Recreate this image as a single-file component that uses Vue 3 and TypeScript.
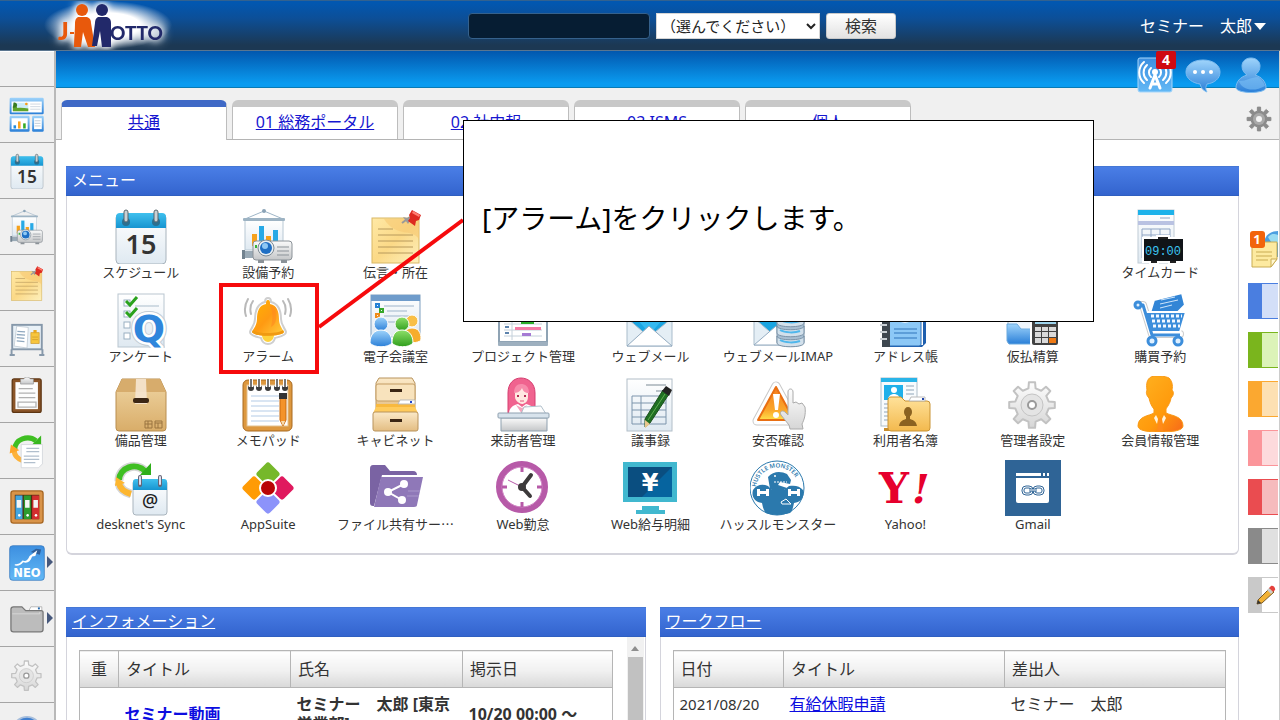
<script setup lang="ts">
import { ref } from 'vue'

interface MenuItem {
  icon: string
  label: string
  place?: 'end'
  marked?: boolean
  shortened?: boolean
}

interface SideItem {
  icon: string
  label: string
  expandable?: boolean
}

const keyword = ref('')
const target = ref('all')
const activeTab = ref(0)

const tabs: string[] = ['共通', '01 総務ポータル', '02 社内報', '03 ISMS', '個人']

const sideItems: SideItem[] = [
  { icon: 'portal', label: 'ポータル' },
  { icon: 'calendar', label: 'スケジュール' },
  { icon: 'projector', label: '設備予約' },
  { icon: 'note', label: '伝言・所在' },
  { icon: 'board', label: 'インフォメーション' },
  { icon: 'clipboard', label: '回覧' },
  { icon: 'docsync', label: 'ワークフロー' },
  { icon: 'binders', label: '文書管理' },
  { icon: 'neo', label: 'NEO', expandable: true },
  { icon: 'folder', label: 'その他', expandable: true },
  { icon: 'gear', label: '設定' },
  { icon: 'help', label: 'ヘルプ' },
]

const menuItems: MenuItem[] = [
  { icon: 'calendar', label: 'スケジュール' },
  { icon: 'projector', label: '設備予約' },
  { icon: 'note', label: '伝言・所在' },
  { icon: 'timecard', label: 'タイムカード', place: 'end' },
  { icon: 'survey', label: 'アンケート' },
  { icon: 'bell', label: 'アラーム', marked: true },
  { icon: 'meeting', label: '電子会議室' },
  { icon: 'project', label: 'プロジェクト管理' },
  { icon: 'mail', label: 'ウェブメール' },
  { icon: 'imap', label: 'ウェブメールIMAP' },
  { icon: 'address', label: 'アドレス帳' },
  { icon: 'expense', label: '仮払精算' },
  { icon: 'cart', label: '購買予約' },
  { icon: 'box', label: '備品管理' },
  { icon: 'memo', label: 'メモパッド' },
  { icon: 'cabinet', label: 'キャビネット' },
  { icon: 'reception', label: '来訪者管理' },
  { icon: 'minutes', label: '議事録' },
  { icon: 'safety', label: '安否確認' },
  { icon: 'directory', label: '利用者名簿' },
  { icon: 'gear', label: '管理者設定' },
  { icon: 'member', label: '会員情報管理' },
  { icon: 'sync', label: "desknet's Sync" },
  { icon: 'appsuite', label: 'AppSuite' },
  { icon: 'share', label: 'ファイル共有サー…', shortened: true },
  { icon: 'clock', label: 'Web勤怠' },
  { icon: 'pay', label: 'Web給与明細' },
  { icon: 'hustle', label: 'ハッスルモンスター' },
  { icon: 'yahoo', label: 'Yahoo!' },
  { icon: 'link', label: 'Gmail' },
]

const notes: string[] = ['blue', 'green', 'orange', 'pink', 'red', 'gray']

/** Outline of a gear wheel with flat-topped teeth. */
function gearPath(cx: number, cy: number, outer: number, inner: number, teeth: number): string {
  const step = (Math.PI * 2) / teeth
  const points: string[] = []
  for (let i = 0; i < teeth; i++) {
    const a = i * step - Math.PI / 2
    const corners: [number, number][] = [
      [inner, a - step * 0.27],
      [outer, a - step * 0.17],
      [outer, a + step * 0.17],
      [inner, a + step * 0.27],
    ]
    for (const [r, t] of corners) {
      points.push(`${(cx + r * Math.cos(t)).toFixed(2)} ${(cy + r * Math.sin(t)).toFixed(2)}`)
    }
  }
  return `M${points.join('L')}Z`
}

const largeGear = gearPath(27, 29, 23, 17, 8)
const smallGear = gearPath(13, 13, 12, 8, 8)
</script>

<template>
  <div class="app">
    <svg class="paints" aria-hidden="true">
      <defs>
        <linearGradient id="g-paper" x1="0" y1="0" x2="0" y2="1"><stop offset="0" stop-color="#ffffff" /><stop offset="1" stop-color="#dfe9f1" /></linearGradient>
        <linearGradient id="g-gray" x1="0" y1="0" x2="0" y2="1"><stop offset="0" stop-color="#fafafa" /><stop offset="1" stop-color="#c4c6c8" /></linearGradient>
        <linearGradient id="g-wheel" x1="0" y1="0" x2="0" y2="1"><stop offset="0" stop-color="#fdfdfd" /><stop offset="1" stop-color="#d6d6d6" /></linearGradient>
        <linearGradient id="g-sky" x1="0" y1="0" x2="0" y2="1"><stop offset="0" stop-color="#3fc0ee" /><stop offset="1" stop-color="#1694d0" /></linearGradient>
        <linearGradient id="g-blue" x1="0" y1="0" x2="0" y2="1"><stop offset="0" stop-color="#9fd4fb" /><stop offset="1" stop-color="#2a7fd8" /></linearGradient>
        <linearGradient id="g-green" x1="0" y1="0" x2="0" y2="1"><stop offset="0" stop-color="#8fe06a" /><stop offset="1" stop-color="#2f9e1c" /></linearGradient>
        <linearGradient id="g-amber" x1="0" y1="0" x2="1" y2="1"><stop offset="0" stop-color="#ffb400" /><stop offset="0.5" stop-color="#ff9a12" /><stop offset="1" stop-color="#ffcf40" /></linearGradient>
        <linearGradient id="g-member" x1="0" y1="0" x2="1" y2="1"><stop offset="0" stop-color="#ffb321" /><stop offset="0.6" stop-color="#ff9a0c" /><stop offset="1" stop-color="#f7691a" /></linearGradient>
        <linearGradient id="g-note" x1="0" y1="0" x2="1" y2="1"><stop offset="0" stop-color="#ffe9a6" /><stop offset="0.5" stop-color="#fbd987" /><stop offset="1" stop-color="#fdf0bd" /></linearGradient>
        <linearGradient id="g-box" x1="0" y1="0" x2="0" y2="1"><stop offset="0" stop-color="#efd5a3" /><stop offset="1" stop-color="#d9ad69" /></linearGradient>
        <linearGradient id="g-cabinet" x1="0" y1="0" x2="0" y2="1"><stop offset="0" stop-color="#fbe9c8" /><stop offset="1" stop-color="#e3bd82" /></linearGradient>
        <linearGradient id="g-folder" x1="0" y1="0" x2="0" y2="1"><stop offset="0" stop-color="#ffe29a" /><stop offset="1" stop-color="#f3b94e" /></linearGradient>
        <linearGradient id="g-warn" x1="0" y1="0" x2="0" y2="1"><stop offset="0" stop-color="#f47a1c" /><stop offset="0.7" stop-color="#fba72b" /><stop offset="1" stop-color="#ffe04a" /></linearGradient>
        <linearGradient id="g-tile" x1="0" y1="0" x2="0" y2="1"><stop offset="0" stop-color="#3d8fe0" /><stop offset="1" stop-color="#62b8f5" /></linearGradient>
        <path id="hustle-arc" d="M6 29a21 21 0 0 1 43 0" />
      </defs>
    </svg>

    <svg class="symbols" aria-hidden="true">
      <symbol id="i-calendar" viewBox="0 0 56 56">
        <rect x="3" y="6" width="50" height="50" rx="4" fill="url(#g-paper)" stroke="#a9b4bd" />
        <path d="M3 20V9a4 4 0 0 1 4-4h42a4 4 0 0 1 4 4v11z" fill="url(#g-sky)" />
        <g fill="#2c6f8f"><circle cx="13" cy="14" r="4" /><circle cx="43" cy="14" r="4" /></g>
        <g fill="#c9d0d4" stroke="#59666e"><rect x="11" y="2" width="4" height="12" rx="2" /><rect x="41" y="2" width="4" height="12" rx="2" /></g>
        <text x="28" y="46" font-family="Noto Sans, sans-serif" font-size="27" font-weight="600" text-anchor="middle" fill="#333">15</text>
      </symbol>

      <symbol id="i-projector" viewBox="0 0 56 56">
        <path d="M5 11 24 3l19 8" fill="none" stroke="#9fb6c8" />
        <circle cx="24" cy="3" r="2" fill="#8aa2b6" />
        <rect x="5" y="12" width="38" height="30" fill="url(#g-paper)" stroke="#b8c8d4" />
        <rect x="3" y="10" width="42" height="3" rx="1" fill="#9db3c3" />
        <rect x="12" y="26" width="5" height="12" fill="#f6a11b" /><rect x="19" y="18" width="5" height="18" fill="#27a9e6" />
        <rect x="26" y="28" width="5" height="8" fill="#f6a11b" /><rect x="33" y="22" width="5" height="14" fill="#27a9e6" />
        <path d="M4 43h10v7H4z" fill="#9aaab6" /><path d="M2 42h3v9H2z" fill="#72828f" />
        <rect x="13" y="33" width="39" height="19" rx="3" fill="url(#g-gray)" stroke="#8b9298" />
        <path d="M18 52h6v3h-6zM41 52h6v3h-6z" fill="#8b9298" />
        <circle cx="26" cy="40" r="8" fill="#e8eef2" stroke="#7d8a94" /><circle cx="26" cy="40" r="6" fill="#1f6fc4" /><circle cx="25" cy="38" r="3" fill="#8fc8f4" />
        <path d="M37 39h12M37 43h12M37 47h12" stroke="#8b9298" />
        <path d="M15 37h2v3h-2z" fill="#35b435" />
      </symbol>

      <symbol id="i-note" viewBox="0 0 56 56">
        <rect x="4" y="10" width="47" height="45" fill="url(#g-note)" stroke="#d9b865" />
        <path d="M51 11v20C44 20 28 30 16 11z" fill="#f6c873" opacity=".6" />
        <path d="M10 21h15M10 27h35M10 33h35M10 39h35M10 45h35" stroke="#b89a5c" />
        <path d="m34 15 8-6" stroke="#999" stroke-width="2" /><path d="M35 9l8 2-3 5z" fill="#9b9b9b" />
        <path d="M41 7l3-5 9 5-2 5-3 1-1 5-7-5 2-3z" fill="#dd2a20" /><path d="M45 3l7 4-1 2-7-4z" fill="#ff7d70" />
      </symbol>

      <symbol id="i-timecard" viewBox="0 0 56 56">
        <rect x="6" y="2" width="36" height="53" fill="url(#g-paper)" stroke="#c0ccd6" />
        <path d="M6 2h36v5H6z" fill="#1db2ea" /><path d="M6 13h36v4H6z" fill="#b9c2e2" />
        <path d="M10 21h28M10 27h28M10 33h28M10 39h28M10 45h28M10 50h28M10 21v29M19 21v29M28 21v29M38 21v29M28 10h10" stroke="#8fa5c4" fill="none" />
        <path d="M11 30h14v-2h12v2h14v24h-6v2h-8v-2H26v2h-8v-2h-7z" fill="#222" stroke="#fff" stroke-width="2" />
        <path d="M12 31h39v22H12z" fill="#101418" />
        <text x="31" y="47" font-family="Liberation Mono, monospace" font-size="12" text-anchor="middle" fill="#3cc6f2">09:00</text>
      </symbol>

      <symbol id="i-survey" viewBox="0 0 56 56">
        <rect x="5" y="2" width="46" height="53" fill="url(#g-paper)" stroke="#b9c6d0" />
        <path d="M22 14h24M22 25h10" stroke="#a9bccb" />
        <g fill="#fff" stroke="#9ab0c2"><rect x="11" y="8" width="6" height="6" /><rect x="11" y="19" width="6" height="6" /><rect x="11" y="30" width="6" height="6" /><rect x="11" y="41" width="6" height="6" /></g>
        <path d="m13 9 4 4 7-8M13 20l4 4 7-8" fill="none" stroke="#2aa21d" stroke-width="3" />
        <text x="36" y="50" font-family="DejaVu Sans, sans-serif" font-size="38" font-weight="700" text-anchor="middle" fill="#fff" stroke="#c3ccd4" stroke-width="7" stroke-linejoin="round" paint-order="stroke">Q</text>
        <text x="36" y="50" font-family="DejaVu Sans, sans-serif" font-size="38" font-weight="700" text-anchor="middle" fill="#2f86dc" stroke="#fff" stroke-width="5" stroke-linejoin="round" paint-order="stroke">Q</text>
      </symbol>

      <symbol id="i-bell" viewBox="0 0 56 56">
        <g fill="none" stroke="#b9b9b9" stroke-width="2" stroke-linecap="round"><path d="M8 7c-3 5-4 11-2 17M13 9c-3 4-3 9-2 13M48 7c3 5 4 11 2 17M43 9c3 4 3 9 2 13" /></g>
        <g transform="translate(1 0)">
          <path d="M27 6c-2 0-3 2-3 4-8 2-10 9-10 17 0 6-4 9-5 13 0 4 8 5 11 6 1 4 4 6 7 6s6-2 7-6c3-1 11-2 11-6-1-4-5-7-5-13 0-8-2-15-10-17 0-2-1-4-3-4z" fill="#fff" stroke="#cfcfcf" stroke-width="2" />
          <path d="M21 43h12c0 4-3 7-6 7s-6-3-6-7z" fill="#ffd23c" />
          <path d="M27 8c-2 0-2 2-2 4-7 1-9 8-9 15 0 6-3 9-5 13 2 5 30 5 32 0-2-4-5-7-5-13 0-7-2-14-9-15 0-2 0-4-2-4z" fill="url(#g-amber)" />
          <path d="M11 40c2 5 30 5 32 0l-1-2c-4 4-26 4-30 0z" fill="#f09a12" />
          <path d="M29 13c6 2 7 9 6 15-1 4-3 6-5 7 2-8 2-15-1-22z" fill="#ff8a1e" opacity=".6" />
        </g>
      </symbol>

      <symbol id="i-meeting" viewBox="0 0 56 56">
        <rect x="3" y="3" width="49" height="42" fill="url(#g-paper)" stroke="#7f9fc0" />
        <path d="M3 3h49v6H3z" fill="#6f9ccb" />
        <path d="M8 12h3v3H8z" fill="none" stroke="#2581d4" stroke-width="2" /><path d="M12 17h3v3h-3z" fill="none" stroke="#36a82c" stroke-width="2" /><path d="M8 22h3v3H8z" fill="none" stroke="#ee8c1b" stroke-width="2" />
        <path d="M16 14h30M19 19h20M16 24h30M16 30h28" stroke="#9db4ca" />
        <g stroke="#fff"><circle cx="44" cy="29" r="6" fill="#f9bf46" /><path d="M34 51c0-10 4-15 10-15s9 4 9 11c0 4-9 4-19 4z" fill="#f6ad2c" />
          <circle cx="13" cy="32" r="7" fill="url(#g-blue)" /><path d="M2 51c0-9 5-13 11-13s11 4 11 13c-4 5-18 5-22 0z" fill="url(#g-blue)" />
          <circle cx="34" cy="32" r="7" fill="url(#g-green)" /><path d="M24 51c0-9 4-13 10-13s11 4 11 13c-4 5-17 5-21 0z" fill="url(#g-green)" /></g>
      </symbol>

      <symbol id="i-project" viewBox="0 0 56 56">
        <rect x="4" y="6" width="48" height="44" fill="#fff" stroke="#8fa3b4" stroke-width="2" />
        <path d="M9 32h38M9 38h38M9 44h38M17 26v22" stroke="#c4d0da" />
        <path d="M26 29h13v3H26z" fill="#2eaf2b" /><path d="M20 35h26v3H20z" fill="#f47aa4" /><path d="M27 41h9v3h-9z" fill="#a57ad4" />
        <path d="M10 29h4M10 35h4M10 41h4" stroke="#5d83ad" stroke-width="2" />
        <rect x="3" y="50" width="50" height="4" rx="1" fill="#9eb0bf" />
      </symbol>

      <symbol id="i-mail" viewBox="0 0 56 56">
        <path d="M5 22 27 4l23 18v32H5z" fill="#1ba5e1" />
        <path d="M14 26h28L28 42z" fill="#35b9f0" />
        <path d="M5 26 27 45 50 26v28H5z" fill="#e4eef5" stroke="#a9bccb" />
        <path d="M5 54 27 34 50 54z" fill="#fff" stroke="#93abc0" />
      </symbol>

      <symbol id="i-imap" viewBox="0 0 56 56">
        <path d="M4 22 26 4l23 18v30H4z" fill="#1ba5e1" />
        <path d="M4 26 26 45 40 34v19H4z" fill="#e4eef5" stroke="#a9bccb" />
        <path d="M4 53 26 34 38 53z" fill="#fff" stroke="#93abc0" />
        <g stroke="#7b93a8"><path d="M27 22v28c0 6 27 6 27 0V22z" fill="#a8bfd2" /><path d="M27 44v7c0 5 27 5 27 0v-7c0 5-27 5-27 0zM27 34v7c0 5 27 5 27 0v-7c0 5-27 5-27 0zM27 24v7c0 5 27 5 27 0v-7z" fill="#d2e0eb" /></g>
        <path d="M30 38c5 3 15 3 20 1M30 48c5 3 15 3 20 1M30 28c5 3 15 3 20 1" stroke="#4fb7ec" stroke-width="2" fill="none" />
      </symbol>

      <symbol id="i-address" viewBox="0 0 56 56">
        <path d="M10 5h39v46l-4 4H10z" fill="#1f5fae" /><path d="M10 5h36v48H10z" fill="#fff" />
        <rect x="8" y="4" width="36" height="50" rx="2" fill="#8cc8f6" stroke="#2b6cb5" />
        <path d="M5 4h8v51H5z" fill="#3e474f" />
        <path d="M3 12h7M3 19h7M3 26h7M3 33h7M3 40h7M3 47h7" stroke="#c9cfd4" stroke-width="2" />
        <circle cx="28" cy="22" r="9" fill="#e9f5ff" />
        <path d="M17 37h23M17 41h23M17 46h23" stroke="#2f74bb" />
      </symbol>

      <symbol id="i-expense" viewBox="0 0 56 56">
        <path d="M3 10h25l4 5v36H3z" fill="#eef5fb" stroke="#a9bccb" />
        <path d="M2 32h10l4 5h14v15H4l-2-3z" fill="url(#g-blue)" stroke="#6ba9de" />
        <rect x="26" y="12" width="28" height="42" rx="3" fill="#424242" stroke="#fff" stroke-width="2" />
        <path d="M30 24h21v8H30z" fill="#9fd5ee" />
        <g fill="#dadada"><path d="M30 35h6v4h-6zM37 35h6v4h-6zM44 35h7v4h-7zM30 40h6v5h-6zM37 40h6v5h-6zM44 40h7v5h-7zM30 46h6v5h-6zM37 46h6v5h-6z" /></g>
        <path d="M44 46h7v5h-7z" fill="#f07a14" />
      </symbol>

      <symbol id="i-cart" viewBox="0 0 56 56">
        <path d="m22 8 28-7 3 12-8 8H18z" fill="#3285d6" stroke="#fff" stroke-width="2" />
        <path d="m29 8 14-3M28 12l18-4M28 16l12-3" stroke="#cfe5fa" stroke-width="1" />
        <g fill="none" stroke-linejoin="round" stroke-linecap="round"><path d="M6 13h5l9 29h28" stroke="#ccc" stroke-width="8" /><path d="M6 13h5l9 29h28" stroke="#fff" stroke-width="6" /></g>
        <path d="M13 20h41l-6 20H19z" fill="#3d8edb" stroke="#fff" stroke-width="2" />
        <path d="M19 24h31M20 29h29M21 34h27" stroke="#f2f8ff" stroke-width="3" stroke-dasharray="3 2" />
        <path d="M6 13h5l9 30h28" fill="none" stroke="#3d8edb" stroke-width="3" stroke-linejoin="round" />
        <g fill="#dff0ff" stroke="#3d8edb" stroke-width="3"><circle cx="6" cy="13" r="3" /><circle cx="20" cy="49" r="4" /><circle cx="46" cy="49" r="4" /></g>
      </symbol>

      <symbol id="i-box" viewBox="0 0 56 56">
        <path d="M9 3h38l6 13v36a3 3 0 0 1-3 3H6a3 3 0 0 1-3-3V16z" fill="url(#g-box)" stroke="#b98e50" />
        <path d="M9 3h38l6 13H3z" fill="#d7ac6c" />
        <path d="M23 3h10l1 25H22z" fill="#f6e5d2" opacity=".9" />
        <rect x="20" y="22" width="16" height="5" rx="2" fill="#3b2614" />
        <path d="M32 45h7v7h-7zM42 45h7v7h-7zM35 45v7M32 48h7M45 47v5M42 47h7" stroke="#9a7440" fill="none" />
      </symbol>

      <symbol id="i-memo" viewBox="0 0 56 56">
        <rect x="3" y="4" width="49" height="51" rx="5" fill="#dd983f" stroke="#a96a20" />
        <rect x="7" y="9" width="41" height="41" fill="#fff" stroke="#e3c08d" />
        <path d="M11 20h28M11 25h28M11 30h28M11 35h28M11 40h28M11 45h28" stroke="#b3cbe6" />
        <g fill="#3c3c3c"><circle cx="11" cy="12" r="3" /><circle cx="19" cy="12" r="3" /><circle cx="28" cy="12" r="3" /><circle cx="37" cy="12" r="3" /><circle cx="45" cy="12" r="3" /></g>
        <path d="M11 3v8M19 3v8M28 3v8M37 3v8M45 3v8" stroke="#fff" stroke-width="4" /><path d="M11 3v8M19 3v8M28 3v8M37 3v8M45 3v8" stroke="#777" stroke-width="2" />
        <path d="M40 22h6v22l-3 6-3-6z" fill="#f4932a" stroke="#c76a10" /><path d="M39 17h8v6h-8z" fill="#333" /><path d="m41 45 2 5 2-5z" fill="#f8dcae" />
      </symbol>

      <symbol id="i-cabinet" viewBox="0 0 56 56">
        <path d="M11 2h33l3 5v29H8V7z" fill="url(#g-cabinet)" stroke="#b8935c" />
        <rect x="8" y="8" width="39" height="17" rx="2" fill="#f8e3bd" stroke="#c39c63" />
        <path d="M8 28h22l3-3h14v12H8z" fill="#f8b93e" /><path d="M32 24h15v4H30z" fill="#fff" stroke="#bbb" /><path d="M42 25h2v2h-2z" fill="#24c" />
        <path d="M8 31h39l3 6H5z" fill="#ffcb5c" />
        <rect x="5" y="36" width="45" height="19" rx="2" fill="url(#g-cabinet)" stroke="#b8935c" />
        <path d="M22 13h12v3H22zM22 43h12v3H22z" fill="#3b2614" />
      </symbol>

      <symbol id="i-reception" viewBox="0 0 56 56">
        <path d="M13 38V17C13 7 19 2 26 2s14 5 14 15v21z" fill="#f0638f" stroke="#d53e70" />
        <path d="M20 14c2-5 11-5 13 0v7c0 5-4 7-6 7s-7-3-7-7z" fill="#ffe9e2" />
        <path d="M19 17c5 0 7-3 8-5 1 3 3 5 7 5 0-7-4-9-8-9s-7 3-7 9z" fill="#f78bab" />
        <path d="M14 38c0-6 4-9 9-10l4 3 4-3c5 1 9 4 9 10z" fill="#fff" /><path d="m21 29 6 9 5-9-5 3z" fill="#f5a3bb" />
        <path d="M22 20h2M29 20h2" stroke="#b52f58" stroke-width="2" /><path d="M25 25h4" stroke="#e2557e" />
        <path d="m29 31 17-1 5 8H26z" fill="#fdfdfd" stroke="#b2c1cc" />
        <path d="M6 42h46v13H6z" fill="url(#g-gray)" stroke="#8fa1b0" />
        <rect x="3" y="37" width="51" height="5" rx="1" fill="#d8e3ec" stroke="#8fa1b0" />
      </symbol>

      <symbol id="i-minutes" viewBox="0 0 56 56">
        <rect x="5" y="3" width="45" height="52" fill="url(#g-paper)" stroke="#b2bec8" />
        <path d="M24 9h20M34 15h10" stroke="#7d8b96" />
        <path d="M10 20h34v28H10zM10 27h34M10 34h34M10 41h34M19 20v28" fill="none" stroke="#7d95ac" />
        <path d="m41 14 6 4-19 29-5 4 0-8z" fill="#1f6f22" stroke="#1b4f1d" /><path d="m23 44 5 4-5 4z" fill="#e8c78e" /><path d="m40 15 4-5 6 4-3 6z" fill="#222" /><path d="m43 18-17 26" stroke="#5fae50" stroke-width="1" />
      </symbol>

      <symbol id="i-safety" viewBox="0 0 56 56">
        <path d="M26 10 45 45H7z" fill="#fff" stroke="#c9c9c9" stroke-width="9" stroke-linejoin="round" />
        <path d="M26 10 45 45H7z" fill="#fff" stroke="#fff" stroke-width="7" stroke-linejoin="round" />
        <path d="M26 11 44 44H8z" fill="url(#g-warn)" stroke="#e96f13" stroke-width="2" stroke-linejoin="round" />
        <path d="M23 18h7l-2 16h-3z" fill="#fff" /><circle cx="26" cy="39" r="3" fill="#fff" />
        <path d="M38 16c0-4 5-4 5 0v11l3-1 3 2 3-1 3 4c1 8-1 13-3 17l1 5H40l-1-4-8-10c-2-4 2-5 4-3l3 3z" fill="url(#g-wheel)" stroke="#aaa" />
      </symbol>

      <symbol id="i-directory" viewBox="0 0 56 56">
        <rect x="4" y="2" width="36" height="48" fill="#f8fbfd" stroke="#aebdc8" /><path d="M4 2h36v4H4z" fill="#29b4e8" />
        <path d="M7 9h19v15H7z" fill="#1fb0ea" /><circle cx="17" cy="14" r="3" fill="#fff" /><path d="M11 24c0-8 12-8 12 0z" fill="#fff" />
        <path d="M29 10h8M29 14h8M29 18h8M7 28h5M7 32h5M7 36h5M7 40h5M7 44h5" stroke="#8fa5b8" />
        <path d="M7 52h9l-3 3H7z" fill="#c78d2c" />
        <path d="M11 25c0-3 1-4 3-4h10l4 4h22a3 3 0 0 1 3 3v24a3 3 0 0 1-3 3H14a3 3 0 0 1-3-3z" fill="url(#g-folder)" stroke="#c99334" />
        <path d="M34 21h14v4H32z" fill="#fff" stroke="#bbb" /><path d="M45 22h2v2h-2z" fill="#24a" />
        <ellipse cx="31" cy="36" rx="4" ry="5" fill="#8b6221" /><path d="M22 50c1-6 5-6 7-7v-3h4v3c2 1 6 1 7 7z" fill="#8b6221" />
      </symbol>

      <symbol id="i-gear" viewBox="0 0 56 56">
        <path :d="largeGear" fill="url(#g-wheel)" stroke="#c2c2c2" stroke-width="2" stroke-linejoin="round" />
        <circle cx="27" cy="29" r="11" fill="#e4e4e4" stroke="#c4c4c4" /><circle cx="27" cy="29" r="4" fill="#fff" stroke="#9a9a9a" stroke-width="2" />
      </symbol>

      <symbol id="i-member" viewBox="0 0 56 56">
        <path d="M19 1c5-2 14-1 18 1 3 3 4 7 3 12 2 2 2 5-1 8-1 6-4 9-5 11v4c6 3 17 3 17 13 0 5-12 6-23 6S6 55 6 50c0-10 11-10 16-13v-4c-2-2-4-6-5-11-3-3-3-6-2-8-1-6 0-11 4-13z" fill="url(#g-member)" stroke="#f99a18" />
        <path d="m24 39 2 4-1 5-3-6zM32 39l-2 4 1 5 3-6z" fill="#fff3dc" /><path d="M27 42h2l2 13h-6z" fill="#ff8a1a" />
      </symbol>

      <symbol id="i-sync" viewBox="0 0 56 56">
        <g fill="none" stroke-width="6"><path d="M6 21A15 14 0 0 1 32 11" stroke="#d5d5d5" stroke-width="9" /><path d="M6 20A15 14 0 0 1 32 11" stroke="#3fbf22" /><path d="M6 23c1 6 5 9 12 11" stroke="#d5d5d5" stroke-width="9" /><path d="M6 23c1 6 5 9 12 11" stroke="#fdb62f" /></g>
        <path d="M27 15h11V3z" fill="#2fae1a" /><path d="M2 26l1-9 9 6z" fill="#fdb62f" />
        <rect x="20" y="20" width="34" height="35" rx="3" fill="url(#g-paper)" stroke="#a9b4bd" />
        <path d="M20 30v-8a3 3 0 0 1 3-3h28a3 3 0 0 1 3 3v8z" fill="url(#g-sky)" />
        <path d="M27 17v8M47 17v8" stroke="#667" stroke-width="4" stroke-linecap="round" /><path d="M27 17v7M47 17v7" stroke="#dde" stroke-width="2" stroke-linecap="round" />
        <text x="37" y="47" font-family="Noto Sans, sans-serif" font-size="18" text-anchor="middle" font-weight="500" fill="#222">@</text>
      </symbol>

      <symbol id="i-appsuite" viewBox="0 0 56 56">
        <rect x="19" y="5" width="18" height="18" rx="3" fill="#76b82a" transform="rotate(45 28 14)" />
        <rect x="5" y="19" width="18" height="18" rx="3" fill="#ff9b05" transform="rotate(45 14 28)" />
        <rect x="33" y="19" width="18" height="18" rx="3" fill="#e0195e" transform="rotate(45 42 28)" />
        <rect x="19" y="33" width="18" height="18" rx="3" fill="#8c93fa" transform="rotate(45 28 42)" />
        <circle cx="28" cy="28" r="8" fill="#b90506" stroke="#fff" stroke-width="2" />
      </symbol>

      <symbol id="i-share" viewBox="0 0 56 56">
        <path d="M2 9c0-3 1-4 3-4h12l5 6h23c3 0 4 2 4 4H14L6 46H5c-2 0-3-1-3-3z" fill="#7a63a3" />
        <path d="M13 17h42l-6 28c0 1-1 2-3 2H6z" fill="#8f78b8" />
        <g fill="#fff"><circle cx="36" cy="24" r="4" /><circle cx="20" cy="32" r="4" /><circle cx="34" cy="40" r="4" /></g><path d="M36 24 20 32l14 8" fill="none" stroke="#fff" stroke-width="2" />
        <path d="M40 31h12M39 36h12" stroke="#aa98cb" />
      </symbol>

      <symbol id="i-clock" viewBox="0 0 56 56">
        <circle cx="27" cy="27" r="23" fill="#fff" stroke="#b75aa8" stroke-width="6" /><circle cx="27" cy="27" r="20" fill="none" stroke="#cf83c3" />
        <path d="M27 7v5M27 42v5M7 27h5M42 27h5" stroke="#b75aa8" stroke-width="3" />
        <path d="m27 27 9-12M27 27l8 9" stroke="#3d3a3b" stroke-width="4" stroke-linecap="round" /><path d="m27 27-14-7" stroke="#b75aa8" stroke-width="1" /><circle cx="27" cy="27" r="4" fill="#3d3a3b" />
      </symbol>

      <symbol id="i-pay" viewBox="0 0 56 56">
        <path d="M1 2h54v40H1z" fill="#41b8cf" /><path d="M6 7h44v30H6z" fill="#0a4e80" /><path d="M50 7v30H20z" fill="#06649f" />
        <text x="28" y="31" font-family="DejaVu Sans, sans-serif" font-size="24" font-weight="700" text-anchor="middle" fill="#fff">¥</text>
        <path d="M20 46h17v4h6v4H14v-4h6z" fill="#41b8cf" />
      </symbol>

      <symbol id="i-hustle" viewBox="0 0 56 56">
        <circle cx="27" cy="28" r="27" fill="#fff" stroke="#2b79ad" />
        <text font-family="Noto Sans, sans-serif" font-size="6" font-weight="600" fill="#2b79ad"><textPath href="#hustle-arc" startOffset="2">HUSTLE MONSTER</textPath></text>
        <path d="M18 17c5-6 13-6 19-3l4 6-1 4-10-2-2 3 9 3c-4 4-12 4-17 1z" fill="#2b79ad" /><path d="M24 22h13" stroke="#fff" stroke-width="1" stroke-dasharray="2 1" /><circle cx="25" cy="16" r="1" fill="#fff" />
        <path d="M3 30c4-6 10-6 15-4l4 4h12l5-4c6-1 11 0 14 4 2 7-2 12-9 13-1 5-2 9-4 10-7 2-16 3-24 0-2-2-3-5-4-10C5 42 1 37 3 30z" fill="#2b79ad" />
        <path d="M7 29h3v2h6v-2h3v7h-3v-2h-6v2H7zM38 29h3v2h6v-2h3v7h-3v-2h-6v2h-3z" fill="#fff" />
        <path d="M31 42l5-3 5 5h-9z" fill="none" stroke="#fff" />
      </symbol>

      <symbol id="i-yahoo" viewBox="0 0 56 56">
        <text x="2" y="43" font-family="DejaVu Serif, serif" font-size="42" font-weight="700" fill="#e6002d">Y</text>
        <text x="35" y="43" font-family="DejaVu Serif, serif" font-size="40" font-weight="700" font-style="italic" fill="#e6002d">!</text>
      </symbol>

      <symbol id="i-link" viewBox="0 0 56 56">
        <path d="M0 0h56v56H0z" fill="#2f6496" />
        <path d="M11 13h33v3H11z" fill="#fff" /><path d="M36 12h2v4h-2zM40 12h2v4h-2z" fill="#2f6496" /><path d="M11 18h33v23a2 2 0 0 1-2 2H13a2 2 0 0 1-2-2z" fill="#fff" />
        <g fill="none" stroke="#2f6496"><rect x="17" y="26" width="11" height="9" rx="4" /><rect x="28" y="26" width="11" height="9" rx="4" /><rect x="19" y="28" width="7" height="5" rx="2" /><rect x="30" y="28" width="7" height="5" rx="2" /><path d="M24 30h8" stroke-width="3" /></g><path d="M24 30h8" stroke="#fff" />
      </symbol>

      <symbol id="i-portal" viewBox="0 0 56 56">
        <rect x="1" y="1" width="53" height="26" rx="2" fill="url(#g-blue)" /><path d="M4 7h47v17H4z" fill="#fff" />
        <path d="M6 9h24v13H6z" fill="#ccecf8" /><path d="M6 22v-8c3-2 6 0 7 3 6-1 11 0 17 1v4z" fill="#5fa52b" /><path d="M7 9c4-2 8 4 4 7l-5 1z" fill="#397b21" /><circle cx="27" cy="11" r="2" fill="#fa9b14" />
        <path d="M33 11h16M33 15h16M33 19h16" stroke="#b7c4d2" stroke-width="1" />
        <rect x="1" y="29" width="31" height="25" rx="2" fill="url(#g-blue)" /><path d="M4 33h25v17H4z" fill="#fff" />
        <path d="M7 44h4v5H7z" fill="#1f8bdd" /><path d="M14 38h4v11h-4z" fill="#fba31c" /><path d="M22 41h4v8h-4z" fill="#36aa25" />
        <rect x="36" y="29" width="18" height="25" rx="2" fill="url(#g-blue)" /><path d="M39 33h12v17H39z" fill="#fff" /><path d="M40 37h9M40 41h9M40 45h9" stroke="#9fb0c2" stroke-width="1" />
      </symbol>

      <symbol id="i-board" viewBox="0 0 56 56">
        <rect x="5" y="6" width="46" height="38" fill="#e9f1f7" stroke="#8698aa" stroke-width="3" /><path d="M4 44v10M52 44v10M1 53h8M47 53h8" stroke="#8698aa" stroke-width="3" />
        <path d="m12 8 18 2-2 32-20-3z" fill="#fff" stroke="#b2bfca" /><path d="m13 16 12 1M12 21l13 1M12 26l12 1M12 31l12 1" stroke="#8fa8bf" stroke-width="2" />
        <path d="M34 18h13v17H34z" fill="#f7c63f" stroke="#c89527" /><path d="M36 25h9M36 29h9" stroke="#c89527" /><path d="M38 14h5v5h-5z" fill="#e9a81f" />
      </symbol>

      <symbol id="i-clipboard" viewBox="0 0 56 56">
        <rect x="5" y="3" width="45" height="52" rx="3" fill="#8b5528" stroke="#5d3512" stroke-width="2" /><path d="M10 8h35v42H10z" fill="#fdfdfd" />
        <path d="M18 3h5c1-4 9-4 10 0h5v8H18z" fill="url(#g-gray)" stroke="#8d8d8d" />
        <path d="M15 18h22M15 25h26M15 32h26M14 39h28v8H14z" stroke="#b1b1b1" fill="none" stroke-width="2" />
      </symbol>

      <symbol id="i-docsync" viewBox="0 0 56 56">
        <g fill="none" stroke-width="8"><path d="M9 25A20 18 0 0 1 42 12" stroke="#3fbf22" /><path d="M8 26c0 9 6 15 14 17" stroke="#fdb23a" /></g>
        <path d="M36 18h14V4z" fill="#38b71f" /><path d="M1 32 3 18l13 9z" fill="#fda52a" />
        <path d="M19 18h33v30l-6 6H19z" fill="#fff" stroke="#c6ccd2" /><path d="M27 24h20M27 29h20M23 36h24M23 41h24M23 46h18" stroke="#b1bfcd" stroke-width="2" />
      </symbol>

      <symbol id="i-binders" viewBox="0 0 56 56">
        <rect x="3" y="3" width="50" height="50" rx="4" fill="#d99449" stroke="#a76622" stroke-width="2" /><path d="M9 9h38v38H9z" fill="#4e2b12" />
        <g><path d="M10 10h11v37H10z" fill="#43a6e0" /><path d="M23 10h11v37H23z" fill="#2c9b2f" /><path d="M36 10h11v37H36z" fill="#d32f2f" /></g>
        <path d="M12 17h7v12h-7zM25 17h7v12h-7zM38 17h7v12h-7z" fill="#f5f5f5" /><g fill="#fff"><circle cx="16" cy="41" r="2" /><circle cx="29" cy="41" r="2" /><circle cx="42" cy="41" r="2" /></g>
      </symbol>

      <symbol id="i-neo" viewBox="0 0 56 56">
        <rect x="1" y="1" width="54" height="54" rx="5" fill="url(#g-tile)" stroke="#2c6fb8" />
        <path d="m34 11 8-5 8 1-2 8z" fill="#2f5f9a" />
        <path d="M9 30c6-1 8-1 12-6 5 2 8 0 11-7L44 8l-3 9-5 1c-3 8-7 11-14 9-3 4-7 6-13 5z" fill="#fff" />
        <text x="28" y="50" font-family="DejaVu Sans, sans-serif" font-size="18" font-weight="700" text-anchor="middle" fill="#fff">NEO</text>
      </symbol>

      <symbol id="i-folder" viewBox="0 0 56 56">
        <path d="M34 9h17v6H31z" fill="#fff" stroke="#999" /><path d="M45 10h3v3h-3z" fill="#26a" />
        <path d="M3 13c0-3 1-4 4-4h13l6 6h24c2 0 3 1 3 3v26c0 2-1 4-4 4H7c-3 0-4-2-4-4z" fill="#bcbcbc" stroke="#777" stroke-width="2" /><path d="M5 20h43v-3" fill="none" stroke="#e4e4e4" />
      </symbol>

      <symbol id="i-help" viewBox="0 0 56 56"><circle cx="28" cy="28" r="22" fill="#3f7fd0" stroke="#a8bfdc" stroke-width="3" /></symbol>
    </svg>

    <header class="topbar">
      <a class="logo" href="#" aria-label="J-MOTTO">
        <svg width="130" height="50" viewBox="0 0 130 50">
          <text x="16" y="39" font-family="Lato, sans-serif" font-size="25" font-weight="900" fill="#e8590c">J</text>
          <path d="M28 31h4v2h-4z" fill="#e8590c" />
          <circle cx="40" cy="9" r="6" fill="#e8590c" /><circle cx="60" cy="9" r="6" fill="#22296a" />
          <path d="M36 16h9c3 1 4 3 4 6l4 24h-7l-5-15-2 15h-7c0-9 1-16 1-24 0-3 1-5 3-6z" fill="#e8590c" />
          <path d="M56 16h9c3 1 4 3 4 6v24h-9l-2-16-3 15h-5l3-23c0-3 1-5 3-6z" fill="#22296a" />
          <text x="68" y="39" font-family="Lato, sans-serif" font-size="19" font-weight="900" fill="#22296a">OTTO</text>
        </svg>
      </a>
      <form class="search" @submit.prevent>
        <input v-model="keyword" type="text" aria-label="キーワード" />
        <select v-model="target" aria-label="検索対象">
          <option value="all">（選んでください）</option>
        </select>
        <button type="submit">検索</button>
      </form>
      <button class="user" type="button"><span>セミナー　太郎</span><i class="caret"></i></button>
    </header>

    <div class="shell">
      <nav class="side">
        <div class="side-blank"></div>
        <a v-for="s in sideItems" :key="s.icon" class="side-item" href="#" :aria-label="s.label">
          <svg width="36" height="36"><use :href="`#i-${s.icon}`" /></svg>
          <i v-if="s.expandable" class="arrow"></i>
        </a>
      </nav>

      <div class="main">
        <div class="bluebar">
          <button type="button" aria-label="お知らせ">
            <svg width="36" height="36" viewBox="0 0 36 36">
              <rect x="1" y="1" width="34" height="34" rx="2" fill="url(#g-tile)" stroke="#a6d6fa" />
              <g fill="none" stroke="#fff" stroke-width="2" stroke-linecap="round"><path d="M14 20a6 6 0 0 1 0-9M22 11a6 6 0 0 1 0 9M10 23a10 10 0 0 1 0-15M26 8a10 10 0 0 1 0 15M7 26a14 14 0 0 1 0-21M29 5a14 14 0 0 1 0 21" /><path d="m18 18-5 13M18 18l5 13M15 27h6" stroke-width="3" /></g><circle cx="18" cy="15" r="3" fill="#fff" />
            </svg>
            <span class="badge">4</span>
          </button>
          <button type="button" aria-label="チャット">
            <svg width="36" height="36" viewBox="0 0 36 36">
              <path d="M18 3C8 3 1 8 1 15s7 11 14 12c1 3 2 6 7 8-2-3-1-6 0-8 7-1 13-5 13-12S28 3 18 3z" fill="url(#g-blue)" stroke="#7dbcf0" />
              <g fill="#fff"><circle cx="10" cy="15" r="2" /><circle cx="18" cy="15" r="2" /><circle cx="26" cy="15" r="2" /></g>
            </svg>
          </button>
          <button type="button" aria-label="プロフィール">
            <svg width="36" height="36" viewBox="0 0 36 36">
              <path d="M18 1c6 0 9 4 9 8s-2 7-5 9c7 2 11 7 11 13-2 6-28 6-30 0 0-6 4-11 11-13-3-2-5-5-5-9s3-8 9-8z" fill="url(#g-blue)" stroke="#7dbcf0" /><path d="M6 24c8 0 12-4 19-4 3 2 6 5 7 9C20 36 8 32 6 24z" fill="#7cc0f5" opacity=".6" />
            </svg>
          </button>
        </div>

        <nav class="tabs">
          <a v-for="(t, i) in tabs" :key="t" href="#" :class="{ active: i === activeTab }" @click.prevent="activeTab = i">{{ t }}</a>
          <button class="cog" type="button" aria-label="ポータル設定">
            <svg width="26" height="26" viewBox="0 0 26 26"><path :d="smallGear" fill="#8b8b8b" stroke="#8b8b8b" stroke-width="1" stroke-linejoin="round" /><circle cx="13" cy="13" r="6" fill="#a9a9a9" /><circle cx="13" cy="13" r="3" fill="#f4f4f4" /></svg>
          </button>
        </nav>

        <div class="content">
          <div class="panels">
            <section class="panel menu">
              <h2>メニュー</h2>
              <div class="grid">
                <a v-for="m in menuItems" :key="m.label" href="#" class="item" :class="{ end: m.place === 'end', marked: m.marked, shortened: m.shortened }">
                  <svg width="56" height="56"><use :href="`#i-${m.icon}`" /></svg>
                  <span>{{ m.label }}</span>
                </a>
              </div>
            </section>

            <div class="pair">
              <section class="panel">
                <h2><a href="#">インフォメーション</a></h2>
                <div class="scroller">
                  <table class="info">
                    <thead>
                      <tr><th class="c-mark">重</th><th class="c-title">タイトル</th><th class="c-name">氏名</th><th>掲示日</th></tr>
                    </thead>
                    <tbody>
                      <tr class="unread"><td></td><td><a href="#">セミナー動画</a></td><td>セミナー　太郎 [東京営業部]</td><td>10/20 00:00 ～</td></tr>
                    </tbody>
                  </table>
                  <div class="bar"><i class="up"></i><i class="thumb"></i></div>
                </div>
              </section>
              <section class="panel">
                <h2><a href="#">ワークフロー</a></h2>
                <div class="sheet">
                  <table class="flow">
                    <thead>
                      <tr><th class="c-date">日付</th><th class="c-subject">タイトル</th><th>差出人</th></tr>
                    </thead>
                    <tbody>
                      <tr><td class="date">2021/08/20</td><td><a href="#">有給休暇申請</a></td><td>セミナー　太郎</td></tr>
                    </tbody>
                  </table>
                </div>
              </section>
            </div>
          </div>

          <aside class="rail">
            <button class="memo" type="button" aria-label="付箋">
              <svg width="30" height="40" viewBox="0 0 30 40">
                <path d="M30 1v26c-9 0-14-6-14-13S21 1 30 1z" fill="#4c9fe0" /><path d="M20 7c4-4 6-3 10-2v8c-4 2-7 0-10-6z" fill="#9bdcf2" />
                <path d="M4 12h25v17l-6 8H4z" fill="#fdeaa0" stroke="#c9ac52" /><path d="M8 22h16M8 26h16M8 30h12" stroke="#c9ac52" /><path d="M29 29h-6v8z" fill="#fff7d0" stroke="#c9ac52" />
                <rect x="2" y="1" width="15" height="17" rx="3" fill="#f2640c" /><text x="9" y="14" font-family="Noto Sans, sans-serif" font-size="13" font-weight="700" text-anchor="middle" fill="#fff">1</text>
              </svg>
            </button>
            <button v-for="n in notes" :key="n" class="note" :class="n" type="button" :aria-label="n"></button>
            <button class="note edit" type="button" aria-label="編集">
              <svg width="20" height="20" viewBox="0 0 20 20"><path d="m2 15 12-12 4 4L6 18l-5 1z" fill="#f2b134" stroke="#7a5a26" /><path d="m13 3 2-2c2-1 5 2 4 4l-2 2z" fill="#e5403c" /><path d="m11 5 4 4 2-2-4-4z" fill="#ccc" /><path d="m1 19 1-4 3 3z" fill="#333" /></svg>
            </button>
          </aside>
        </div>
      </div>
    </div>

    <svg class="leader" width="148" height="112" viewBox="0 0 148 112"><path d="M3 108 147 1" stroke="#f60a0c" stroke-width="4" /></svg>
    <div class="callout">[アラーム]をクリックします。</div>
  </div>
</template>

<style>
body {
  overflow: hidden;
}
</style>

<style scoped>
.app {
  --edge: #b4b4b4;
  position: relative;
  display: flex;
  flex-direction: column;
  height: 100vh;
  overflow: hidden;
  background: #fff;
  color: #333;
  font-family: "Noto Sans", "Noto Sans CJK JP", sans-serif;
  font-size: 16px;
  line-height: 20px;
}
.app * {
  box-sizing: border-box;
}
button {
  margin: 0;
  padding: 0;
  border: 0;
  background: none;
  font: inherit;
  color: inherit;
  cursor: pointer;
}
svg {
  display: block;
  overflow: visible;
}
.paints {
  position: absolute;
  width: 0;
  height: 0;
}
.symbols {
  display: none;
}

.topbar {
  display: grid;
  grid-template-columns: 1fr auto 1fr;
  align-items: center;
  flex: none;
  height: 51px;
  padding: 0 14px 0 42px;
  overflow: hidden;
  background: linear-gradient(#0257b0 4%, #0c4f98 35%, #1c3853 90%);
  border-top: 1px solid #33628f;
  border-bottom: 1px solid #5b7690;
}
.logo {
  width: 130px;
  background: radial-gradient(ellipse closest-side at 66px 24px, #fff 50%, rgba(255, 255, 255, 0) 100%);
}
.logo svg {
  filter: drop-shadow(0 0 3px #fff) drop-shadow(0 0 5px #fff);
}
.search {
  display: flex;
  gap: 6px;
  height: 26px;
  margin-right: -28px;
  margin-left: 28px;
}
.search input {
  width: 182px;
  padding: 0 6px;
  border: 1px solid #35618c;
  border-radius: 4px;
  background: #061d33;
  color: #fff;
  font: inherit;
}
.search select {
  width: 164px;
  border: 1px solid #d5d5d5;
  background: #fff;
  color: #222;
  font: inherit;
  font-size: 15px;
}
.search button {
  width: 70px;
  border: 1px solid #c9c9c9;
  border-radius: 3px;
  background: linear-gradient(#fff, #e2e2e2);
  line-height: 22px;
}
.user {
  display: flex;
  align-items: center;
  gap: 2px;
  justify-self: end;
  color: #fff;
}
.caret {
  border: 6px solid transparent;
  border-top: 7px solid #fff;
  border-bottom: 0;
}

.shell {
  display: flex;
  flex: 1;
  min-height: 0;
}
.side {
  flex: none;
  width: 56px;
  overflow: hidden;
  background: #f0f0f0;
  border-right: 2px solid #b9b9b9;
}
.side-blank {
  height: 35px;
  border-top: 1px solid #fff;
}
.side-item {
  position: relative;
  display: grid;
  place-items: center;
  height: 56px;
  border-top: 1px solid #a5a5a5;
}
.arrow {
  position: absolute;
  right: 1px;
  top: 21px;
  border: 6px solid transparent;
  border-left: 6px solid #46587c;
  border-right: 0;
}

.main {
  display: flex;
  flex-direction: column;
  flex: 1;
  min-width: 0;
  border-right: 1px solid #ccc;
}
.bluebar {
  display: flex;
  align-items: flex-start;
  justify-content: flex-end;
  gap: 12px;
  flex: none;
  height: 37px;
  padding: 6px 10px 0 0;
  background: linear-gradient(#0257ae, #0a9bf0 90%);
  border-bottom: 1px solid #087bb5;
}
.bluebar button {
  position: relative;
  z-index: 1;
}
.badge {
  position: absolute;
  top: -6px;
  right: -3px;
  width: 20px;
  border-radius: 2px;
  background: #cf0a12;
  color: #fff;
  font-size: 14px;
  font-weight: 700;
  line-height: 18px;
}

.tabs {
  display: flex;
  align-items: flex-end;
  gap: 5px;
  flex: none;
  height: 52px;
  padding: 0 7px 0 5px;
  background: #f0f0f0;
  border-bottom: 1px solid var(--edge);
}
.tabs a {
  width: 166px;
  height: 39px;
  border: 1px solid #bdbdbd;
  border-top: 7px solid #c8c8c8;
  border-bottom: 0;
  border-radius: 6px 6px 0 0;
  background: #fff;
  color: #1616d0;
  line-height: 31px;
  text-align: center;
}
.tabs .active {
  height: 40px;
  margin-bottom: -1px;
  border-top-color: #3f69c6;
}
.cog {
  margin: 0 0 7px auto;
}

.content {
  display: flex;
  gap: 9px;
  padding: 26px 1px 0 10px;
}
.panels {
  flex: 1;
  min-width: 0;
}
.panel {
  border: 1px solid #d4d4dc;
  border-top: 0;
  border-radius: 0 0 6px 6px;
}
.panel h2 {
  height: 30px;
  margin: 0 -1px;
  padding: 0 6px;
  border-top: 1px solid #4577d5;
  border-bottom: 1px solid #2f5fc0;
  background: linear-gradient(#4a7ee6, #3364ce);
  color: #fff;
  font-size: 16px;
  font-weight: 400;
  line-height: 27px;
}
.panel h2 a {
  color: #fff;
}
.menu {
  border-bottom-width: 2px;
}
.grid {
  display: grid;
  grid-template-columns: repeat(9, minmax(0, 1fr));
  row-gap: 12px;
  padding: 12px 14px 21px 10px;
}
.item {
  position: relative;
  display: flex;
  flex-direction: column;
  align-items: center;
  color: #333;
  font-size: 13px;
  line-height: 16px;
  text-decoration: none;
  white-space: nowrap;
}
.end {
  grid-column-start: 9;
}
.shortened {
  font-family: "Noto Sans CJK JP", sans-serif;
}
.marked::after {
  content: "";
  position: absolute;
  inset: -9px 13px -10px 15px;
  border: 4px solid #f60a0c;
}

.pair {
  display: grid;
  grid-template-columns: 1fr 1fr;
  gap: 14px;
  margin-top: 52px;
}
.scroller {
  display: flex;
  gap: 14px;
  padding: 0 1px 0 12px;
}
.sheet {
  padding: 13px 12px 0;
}
table {
  width: 100%;
  table-layout: fixed;
  border-collapse: collapse;
  border: 1px solid #b5b5b5;
}
.info {
  flex: 1;
  width: auto;
  margin-top: 13px;
}
th {
  height: 37px;
  padding: 0 7px;
  border: 1px solid #b5b5b5;
  background: linear-gradient(#fff, #f0f0f0 55%, #d8d8d8);
  font-weight: 400;
  text-align: left;
}
td {
  padding: 6px;
}
td a {
  color: #0d0de0;
}
.c-mark {
  width: 39px;
  padding: 0;
  text-align: center;
}
.c-title,
.c-name {
  width: 172px;
}
.c-date {
  width: 20%;
}
.c-subject {
  width: 40%;
}
.date {
  font-size: 15px;
}
.unread {
  font-weight: 700;
}
.bar {
  display: flex;
  flex-direction: column;
  align-items: center;
  gap: 6px;
  width: 17px;
  padding-top: 9px;
  background: #f1f1f1;
}
.up {
  border: 4px solid transparent;
  border-top: 0;
  border-bottom: 5px solid #8e8e8e;
}
.thumb {
  flex: 1;
  width: 15px;
  background: #c1c1c1;
}

.rail {
  display: flex;
  flex-direction: column;
  gap: 13px;
  flex: none;
  width: 30px;
  padding-top: 64px;
}
.note {
  --tone: #4a7ee0;
  --soft: #d3dff8;
  height: 36px;
  border: 1px solid var(--tone);
  border-left-width: 14px;
  border-right: 0;
  background: var(--soft);
}
.green {
  --tone: #7ab51d;
  --soft: #dcf3b8;
}
.orange {
  --tone: #fba830;
  --soft: #fde0b2;
}
.pink {
  --tone: #fb959a;
  --soft: #fddadc;
}
.red {
  --tone: #ea4c50;
  --soft: #f6bbbd;
}
.gray {
  --tone: #8a8a8a;
  --soft: #e0e0e0;
}
.edit {
  --tone: #c9c9c9;
  --soft: #fff;
}
.edit svg {
  margin-left: -6px;
}

.leader {
  position: absolute;
  left: 316px;
  top: 219px;
}
.callout {
  position: absolute;
  left: 463px;
  top: 120px;
  display: flex;
  align-items: center;
  width: 631px;
  height: 202px;
  padding: 0 18px 6px;
  border: 1px solid #000;
  background: #fff;
  color: #000;
  font-size: 28px;
  z-index: 2;
}
</style>
